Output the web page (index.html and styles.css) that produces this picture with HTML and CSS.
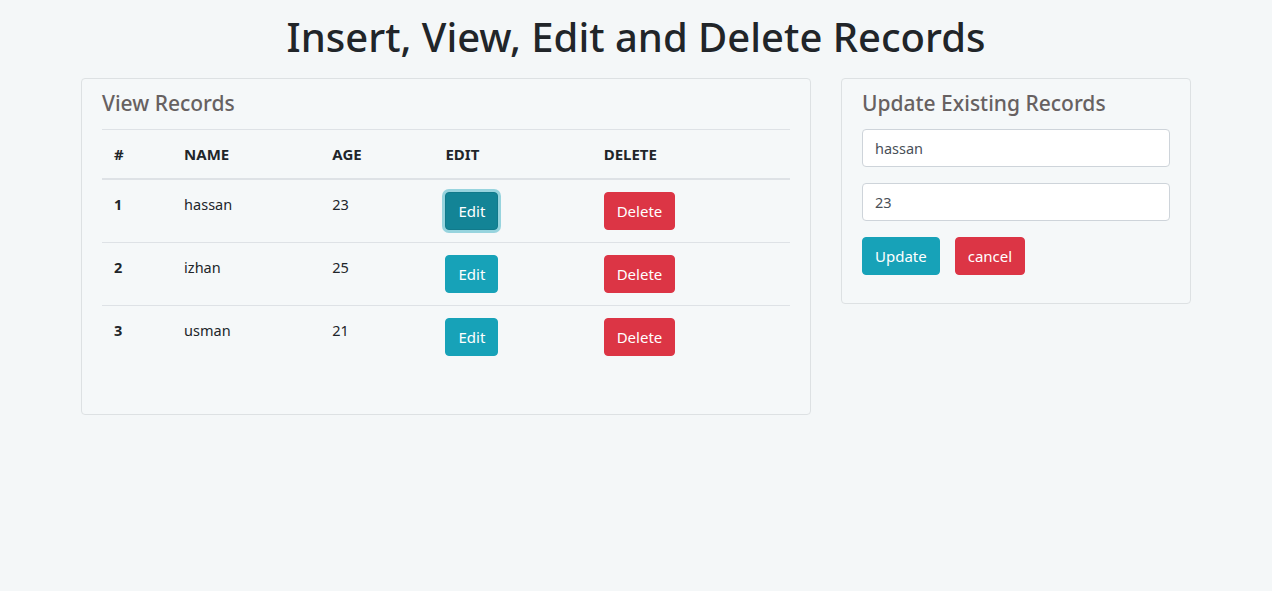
FILE: index.html
```html
<!DOCTYPE html>
<html lang="en">
<head>
<meta charset="utf-8">
<title>Records</title>
<link rel="stylesheet" href="styles.css">
</head>
<body>
<h1 class="page-title">Insert, View, Edit and Delete Records</h1>
<div class="container">
  <div class="col-left">
    <div class="card card-view">
      <h4 class="card-title">View Records</h4>
      <table class="table">
        <thead>
          <tr><th class="c1">#</th><th class="c2">NAME</th><th class="c3">AGE</th><th class="c4">EDIT</th><th class="c5">DELETE</th></tr>
        </thead>
        <tbody>
          <tr><td class="num">1</td><td>hassan</td><td>23</td><td><button class="btn btn-info focus">Edit</button></td><td><button class="btn btn-danger">Delete</button></td></tr>
          <tr><td class="num">2</td><td>izhan</td><td>25</td><td><button class="btn btn-info">Edit</button></td><td><button class="btn btn-danger">Delete</button></td></tr>
          <tr><td class="num">3</td><td>usman</td><td>21</td><td><button class="btn btn-info">Edit</button></td><td><button class="btn btn-danger">Delete</button></td></tr>
        </tbody>
      </table>
    </div>
  </div>
  <div class="col-right">
    <div class="card card-update">
      <h4 class="card-title">Update Existing Records</h4>
      <input class="form-control" type="text" value="hassan">
      <input class="form-control" type="text" value="23">
      <div class="actions">
        <button class="btn btn-info">Update</button>
        <button class="btn btn-danger">cancel</button>
      </div>
    </div>
  </div>
</div>
</body>
</html>
```
FILE: styles.css
```css
* { box-sizing: border-box; }
body {
  margin: 0;
  background: #f4f7f8;
  font-family: "Noto Sans", "Open Sans", sans-serif;
  color: #212529;
  font-size: 15px;
}
.page-title {
  margin: 10px 0 14px;
  text-align: center;
  font-size: 40px;
  font-weight: 500;
  line-height: 54px;
  color: #212529;
}
.container {
  width: 1140px;
  margin: 0 auto;
  display: flex;
}
.col-left { width: 760px; padding: 0 15px; }
.col-right { width: 380px; padding: 0 15px; }
.card {
  border: 1px solid #dde1e3;
  border-radius: 4px;
  background: #f5f8f9;
  padding: 6px 20px 20px;
}
.card-view { height: 337px; }
.card-update { height: 226px; }
.card-title {
  margin: 0 0 8px;
  font-size: 21px;
  font-weight: 500;
  line-height: 36px;
  color: #676161;
}
.table {
  width: 100%;
  border-collapse: collapse;
}
.table th, .table td {
  text-align: left;
  padding: 12px;
  line-height: 24px;
  vertical-align: top;
  border-top: 1px solid #dee2e6;
}
.table th {
  font-weight: 700;
  font-size: 15px;
  border-bottom: 2px solid #dee2e6;
}
.table td { font-size: 14.5px; }
.table td.num { font-weight: 700; }
.c1 { width: 70px; }
.c2 { width: 148px; }
.c3 { width: 113px; }
.c4 { width: 158px; }
.c5 { width: 198px; }
.btn {
  font-family: inherit;
  font-size: 15px;
  line-height: 24px;
  padding: 6px 12px;
  border: 1px solid transparent;
  border-radius: 4px;
  color: #fff;
  cursor: pointer;
}
.btn-info { background: #17a2b8; border-color: #17a2b8; }
.btn-info.focus {
  background: #138496;
  border-color: #117a8b;
  box-shadow: 0 0 0 3px rgba(58, 176, 195, 0.5);
}
.btn-danger { background: #dc3545; border-color: #dc3545; }
.form-control {
  display: block;
  width: 100%;
  height: 38px;
  padding: 6px 12px;
  margin-bottom: 16px;
  font-family: inherit;
  font-size: 14.5px;
  color: #495057;
  background: #fff;
  border: 1px solid #ced4da;
  border-radius: 4px;
}
.actions { display: flex; gap: 15px; }
```
